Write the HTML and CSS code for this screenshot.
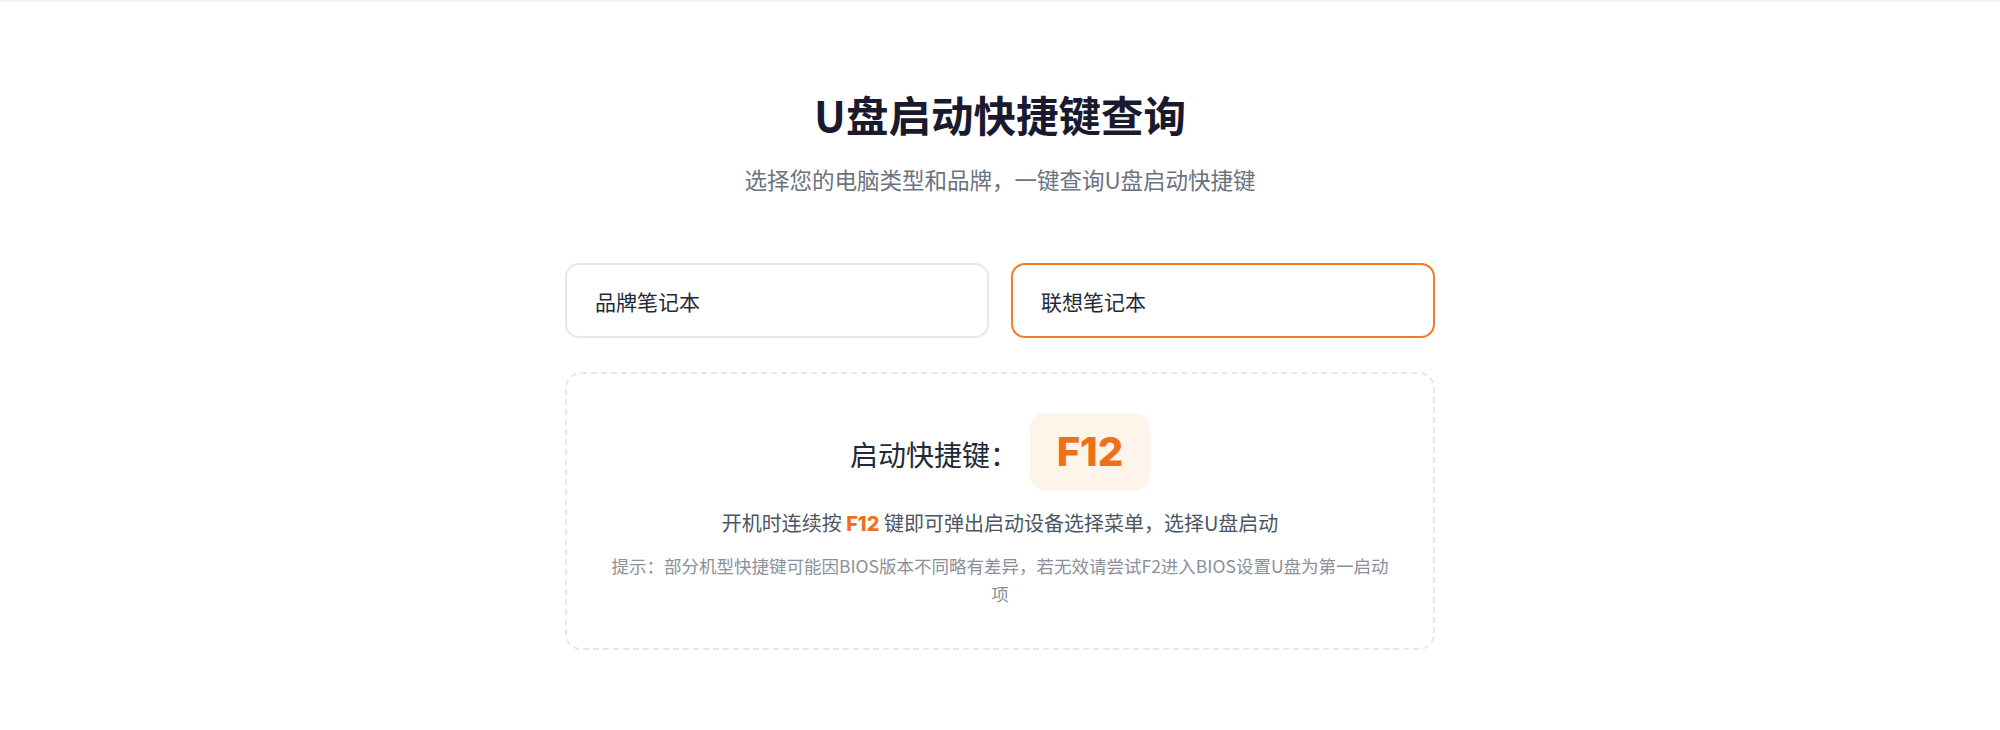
FILE: index.html
```html
<!DOCTYPE html>
<html lang="zh-CN">
<head>
<meta charset="utf-8">
<title>U盘启动快捷键查询</title>
<link rel="stylesheet" href="styles.css">
</head>
<body>
<div class="topline"></div>
<main class="page">
  <h1 class="title">U盘启动快捷键查询</h1>
  <p class="subtitle">选择您的电脑类型和品牌，一键查询U盘启动快捷键</p>
  <div class="selects">
    <div class="select">品牌笔记本</div>
    <div class="select active">联想笔记本</div>
  </div>
  <section class="result">
    <div class="key-row">
      <span class="key-label">启动快捷键：</span>
      <span class="key-badge">F12</span>
    </div>
    <p class="desc">开机时连续按 <b class="hl">F12</b> 键即可弹出启动设备选择菜单，选择U盘启动</p>
    <p class="tip">提示：部分机型快捷键可能因BIOS版本不同略有差异，若无效请尝试F2进入BIOS设置U盘为第一启动项</p>
  </section>
</main>
</body>
</html>
```
FILE: styles.css
```css
html, body {
  margin: 0;
  padding: 0;
  background: #ffffff;
}
body {
  font-family: "Noto Sans CJK SC", "Noto Sans", sans-serif;
  color: #1f2937;
}
.topline {
  height: 2px;
  background: #f4f4f5;
}
.page {
  width: 870px;
  margin: 0 auto;
  padding-top: 83px;
  display: flex;
  flex-direction: column;
  align-items: stretch;
}
.title {
  margin: 0;
  text-align: center;
  font-size: 42.5px;
  line-height: 57px;
  font-weight: 700;
  color: #1a1a2e;
}
.subtitle {
  margin: 20px 0 0;
  text-align: center;
  font-size: 22.5px;
  line-height: 34px;
  color: #6b7280;
}
.selects {
  margin-top: 67px;
  display: grid;
  grid-template-columns: 1fr 1fr;
  gap: 22px;
}
.select {
  height: 71px;
  box-sizing: content-box;
  border: 2px solid #e5e7eb;
  border-radius: 14px;
  padding: 0 28px;
  display: flex;
  align-items: center;
  font-size: 21px;
  color: #1f2937;
  background: #fff;
}
.select.active {
  border-color: #ef7b2b;
}
.result {
  margin-top: 34px;
  border: 2px dashed #e5e7eb;
  border-radius: 16px;
  padding: 39px 38px 40px;
  display: flex;
  flex-direction: column;
  align-items: center;
  text-align: center;
}
.key-row {
  display: flex;
  align-items: baseline;
  justify-content: center;
  gap: 12px;
}
.key-label {
  font-size: 28px;
  color: #1f2937;
}
.key-badge {
  background: #fff4e9;
  border-radius: 15px;
  width: 120px;
  box-sizing: border-box;
  text-align: center;
  padding: 14px 0;
  font-family: Inter, "Noto Sans", sans-serif;
  font-size: 40px;
  line-height: 50px;
  font-weight: 800;
  color: #f07019;
}
.desc {
  margin: 15px 0 0;
  font-size: 20px;
  line-height: 34px;
  color: #4b5563;
}
.hl {
  font-family: Inter, "Noto Sans", sans-serif;
  color: #f07019;
  font-weight: 800;
}
.tip {
  margin: 11px 0 0;
  font-size: 17.5px;
  line-height: 28px;
  color: #8b9099;
}
```
